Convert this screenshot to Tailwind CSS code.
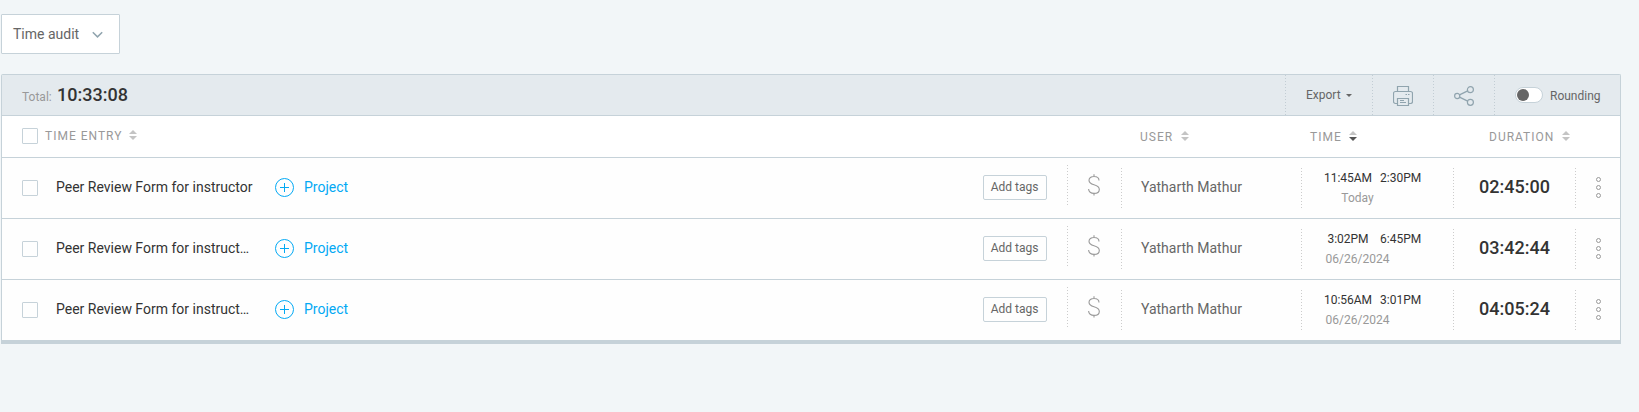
<!DOCTYPE html>
<html lang="en">
<head>
<meta charset="utf-8">
<title>Time audit</title>
<script src="https://cdn.jsdelivr.net/npm/@tailwindcss/browser@4"></script>
</head>
<body class="bg-[#f2f6f8] font-[Roboto,sans-serif] text-sm text-[#333] h-[412px] overflow-hidden pl-px pt-3.5">
<svg class="hidden">
  <symbol id="sort" viewBox="0 0 8 10"><path d="M0 4 4 0l4 4z"/><path d="M0 6h8l-4 4z"/></symbol>
  <symbol id="dollar" viewBox="0 0 12 22"><path d="M11 6.500C11 3.800 9 2.500 6 2.500S1 4 1 6.300C1 9 3 10 6 10.800s5.300 2 5.300 4.600c0 2.600-2.200 4-5.300 4S.6 17.800.6 15.100M6 .3v2.200M6 19.400v2.100" fill="none" stroke="#999" stroke-width="1.100"/></symbol>
</svg>

<button class="flex w-[119px] h-10 items-center border border-[#c6d2d9] bg-white pl-[11px] text-[#666] rounded-[1px]">
  <span class="w-[79px] text-left leading-5 -mt-px">Time audit</span>
  <svg class="w-[11px] h-2 mt-px" viewBox="0 0 11 8" fill="none" stroke="#90a4ae" stroke-width="1.500"><path d="M.8 1.200 5.500 5.900l4.700-4.700"/></svg>
</button>

<main class="mt-5 w-[1620px] border border-b-0 border-[#c6d2d9] rounded-t-[2px]">
  <header class="flex h-[41px] border-b border-[#c6d2d9] bg-[#e4eaee]">
    <div class="flex flex-1 items-baseline pl-5 pt-2">
      <span class="w-[35px] text-xs text-[#999]">Total:</span>
      <strong class="text-lg leading-6 font-medium">10:33:08</strong>
    </div>
    <div class="flex w-[87px] bg-[repeating-linear-gradient(#c2cdd4_0_1px,transparent_1px_3px)] bg-[length:1px_100%] bg-no-repeat pl-[21px] pt-3 text-xs leading-4 text-[#666]">
      <span class="w-10">Export</span>
      <svg class="w-1.5 h-[3px] mt-[7px]" viewBox="0 0 6 3"><path d="M0 0h6L3 3z" fill="#666"/></svg>
    </div>
    <div class="w-[61px] bg-[repeating-linear-gradient(#c2cdd4_0_1px,transparent_1px_3px)] bg-[length:1px_100%] bg-no-repeat pl-[21px] pt-[11px]">
      <svg class="size-5" viewBox="0 0 20 20" fill="none" stroke="#90a4ae" stroke-width="1.200"><path d="M4.500 5.500v-5h11v5M4.500 17.500h-2c-1.200 0-2-.8-2-2v-8c0-1.200.8-2 2-2h15c1.200 0 2 .8 2 2v8c0 1.200-.8 2-2 2h-2M4.500 12.500h11v7h-11zM7 14.500h4M7 16.500h6M12.500 8.500H14M15 8.500h1.500"/></svg>
    </div>
    <div class="w-[61px] bg-[repeating-linear-gradient(#c2cdd4_0_1px,transparent_1px_3px)] bg-[length:1px_100%] bg-no-repeat pl-[21px] pt-[11px]">
      <svg class="size-5" viewBox="0 0 20 20" fill="none" stroke="#90a4ae" stroke-width="1.200"><circle cx="3.200" cy="10" r="2.600"/><circle cx="16.400" cy="3.700" r="3"/><circle cx="16.400" cy="16.300" r="3"/><path d="m5.500 8.900 8.200-4M5.500 11.100l8.200 4"/></svg>
    </div>
    <div class="flex w-[126px] bg-[repeating-linear-gradient(#c2cdd4_0_1px,transparent_1px_3px)] bg-[length:1px_100%] bg-no-repeat pl-[21px] pt-3">
      <span class="flex w-7 h-4 items-center rounded-full border border-[#c6d2d9] bg-white pl-px"><i class="size-3 rounded-full bg-[#666]"></i></span>
      <span class="ml-[7px] mt-px text-xs leading-4 text-[#666]">Rounding</span>
    </div>
  </header>

  <div class="flex h-[42px] border-b border-[#c6d2d9] bg-white pt-[11px] text-xs leading-[18px] tracking-[1px] text-[#999]">
    <div class="flex w-[1138px] pl-5"><i class="size-4 mt-px mr-[7px] border border-[#c6d2d9] rounded-[1px]"></i><span class="w-[84px]">TIME ENTRY</span><svg class="w-2 h-[10px] mt-[3px]" fill="#c4c4c4"><use href="#sort"/></svg></div>
    <div class="flex w-[170px]"><span class="w-[41px] mt-px">USER</span><svg class="w-2 h-[10px] mt-1" fill="#c4c4c4"><use href="#sort"/></svg></div>
    <div class="flex w-[179px]"><span class="w-[39px] mt-px">TIME</span><svg class="w-2 h-[10px] mt-1" viewBox="0 0 8 10"><path d="M0 4 4 0l4 4z" fill="#c4c4c4"/><path d="M0 6h8l-4 4z" fill="#555"/></svg></div>
    <div class="flex"><span class="w-[73px] mt-px">DURATION</span><svg class="w-2 h-[10px] mt-1" fill="#c4c4c4"><use href="#sort"/></svg></div>
  </div>

  <section id="rows" class="bg-[#fefefe] border-b-4 border-[#c6d2d9]"></section>
</main>

<template id="row">
  <article class="flex h-[61px] border-b border-[#c6d2d9] last:h-[60px] last:border-b-0">
    <div class="flex w-[981px] pl-5">
      <i class="size-4 mt-[22px] border border-[#c6d2d9] rounded-[1px]"></i>
      <span data-k="name" class="ml-[18px] w-[219px] mt-[19px] leading-5"></span>
      <svg class="w-[19px] h-[19px] mt-5" viewBox="0 0 19 19" fill="none" stroke="#03a9f4"><circle cx="9.500" cy="9.500" r="9"/><path d="M5 9.500h9M9.500 5v9"/></svg>
      <span class="ml-2.5 mt-[19px] leading-5 text-[#03a9f4]">Project</span>
    </div>
    <div class="w-16 h-[25px] mt-[17px] border border-[#c6d2d9] rounded-[2px] text-center text-xs leading-[22px] text-[#666]"><span class="-ml-px">Add tags</span></div>
    <div class="ml-5 mt-[7px] h-10 w-[54px] bg-[repeating-linear-gradient(#ccc_0_1px,transparent_1px_3px)] bg-[length:1px_100%] bg-no-repeat pl-[21px] pt-[9px]"><svg class="w-3 h-[22px]"><use href="#dollar"/></svg></div>
    <div class="mt-2.5 h-10 w-[180px] bg-[repeating-linear-gradient(#ccc_0_1px,transparent_1px_3px)] bg-[length:1px_100%] bg-no-repeat pl-5 pt-[9px] leading-5 text-[#666]">Yatharth Mathur</div>
    <div class="mt-2.5 h-10 w-[152px] bg-[repeating-linear-gradient(#ccc_0_1px,transparent_1px_3px)] bg-[length:1px_100%] bg-no-repeat text-xs leading-4">
      <div class="flex pl-[19px] pt-0.5"><span data-k="from" class="w-14 text-center"></span><span data-k="to" class="ml-1"></span></div>
      <div data-k="day" class="w-[113px] mt-1 text-center text-[#999]"></div>
    </div>
    <div data-k="dur" class="mt-2.5 h-10 w-[122px] bg-[repeating-linear-gradient(#ccc_0_1px,transparent_1px_3px)] bg-[length:1px_100%] bg-no-repeat pl-[26px] pt-[7px] text-lg leading-6 font-medium"></div>
    <div class="mt-2.5 h-10 bg-[repeating-linear-gradient(#ccc_0_1px,transparent_1px_3px)] bg-[length:1px_100%] bg-no-repeat pl-[21px] pt-[9px]"><svg class="w-[5px] h-[21px]" viewBox="0 0 5 21" fill="none" stroke="#999"><circle cx="2.500" cy="2.500" r="2"/><circle cx="2.500" cy="10.500" r="2"/><circle cx="2.500" cy="18.500" r="2"/></svg></div>
  </article>
</template>
<script>
[
  { name: "Peer Review Form for instructor", from: "11:45AM", to: "2:30PM", day: "Today", dur: "02:45:00" },
  { name: "Peer Review Form for instruct…", from: "3:02PM", to: "6:45PM", day: "06/26/2024", dur: "03:42:44" },
  { name: "Peer Review Form for instruct…", from: "10:56AM", to: "3:01PM", day: "06/26/2024", dur: "04:05:24" }
].forEach(entry => {
  const node = document.getElementById("row").content.cloneNode(true);
  node.querySelectorAll("[data-k]").forEach(el => { el.textContent = entry[el.dataset.k]; });
  document.getElementById("rows").append(node);
});
</script>
</body>
</html>
